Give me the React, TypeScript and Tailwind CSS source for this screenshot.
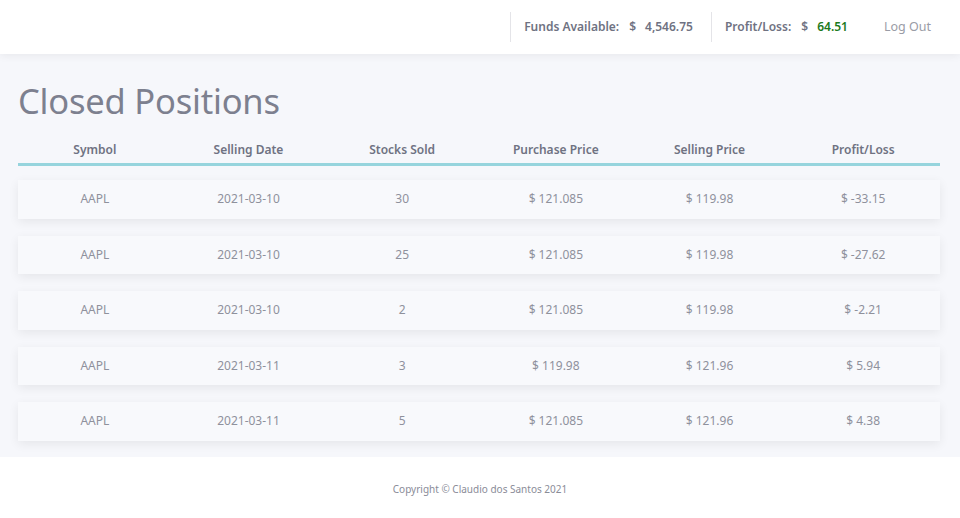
const rows = [
  { symbol: "AAPL", date: "2021-03-10", sold: "30", purchase: "$ 121.085", selling: "$ 119.98", pl: "$ -33.15" },
  { symbol: "AAPL", date: "2021-03-10", sold: "25", purchase: "$ 121.085", selling: "$ 119.98", pl: "$ -27.62" },
  { symbol: "AAPL", date: "2021-03-10", sold: "2", purchase: "$ 121.085", selling: "$ 119.98", pl: "$ -2.21" },
  { symbol: "AAPL", date: "2021-03-11", sold: "3", purchase: "$ 119.98", selling: "$ 121.96", pl: "$ 5.94" },
  { symbol: "AAPL", date: "2021-03-11", sold: "5", purchase: "$ 121.085", selling: "$ 121.96", pl: "$ 4.38" },
];

const headers = ["Symbol", "Selling Date", "Stocks Sold", "Purchase Price", "Selling Price", "Profit/Loss"];

const App = () => {
  return (
    <div className="min-h-screen bg-white flex flex-col" style={{ fontFamily: '"Noto Sans", "Open Sans", sans-serif' }}>
      <header className="relative z-10 h-[54px] bg-white shadow-[0_2px_8px_rgba(0,0,0,0.06)] flex items-center justify-end pr-[29px] text-[12px] text-[#6f7282]">
        <div className="flex items-center h-[30px] border-l border-[#e4e4e8] pl-[13px] pr-[18px] font-semibold">
          <span>Funds Available:</span>
          <span className="ml-[10px]">$</span>
          <span className="ml-[9px]">4,546.75</span>
        </div>
        <div className="flex items-center h-[30px] border-l border-[#e4e4e8] pl-[13px] font-semibold">
          <span>Profit/Loss:</span>
          <span className="ml-[10px]">$</span>
          <span className="ml-[9px] text-[#1c7a1c]">64.51</span>
        </div>
        <span className="ml-[36px] text-[12.5px] text-[#9a9ca6]">Log Out</span>
      </header>

      <main className="bg-[#f6f7fb] pl-[18px] pr-[20px] pt-[22px] pb-[16px]">
        <h1 className="text-[34.5px] leading-[50px] text-[#7d808f] font-normal tracking-[-0.2px]">Closed Positions</h1>
        <div className="mt-[15px] grid grid-cols-6 border-b-[3px] border-[#96d4dd] pb-[4px]">
          {headers.map((h) => (
            <div key={h} className="text-center text-[12px] font-semibold text-[#6f7282]">{h}</div>
          ))}
        </div>
        <div className="mt-[14px] flex flex-col gap-[17px]">
          {rows.map((r, i) => (
            <div key={i} className="grid grid-cols-6 h-[38.5px] items-center bg-[#f8f9fc] shadow-[0_3px_10px_rgba(0,0,0,0.07)] text-[12px] text-[#8f919c]">
              <div className="text-center">{r.symbol}</div>
              <div className="text-center">{r.date}</div>
              <div className="text-center">{r.sold}</div>
              <div className="text-center">{r.purchase}</div>
              <div className="text-center">{r.selling}</div>
              <div className="text-center">{r.pl}</div>
            </div>
          ))}
        </div>
      </main>

      <footer className="flex-1 bg-white flex justify-center pt-[25px] text-[10px] text-[#8a8c98]">
        Copyright © Claudio dos Santos 2021
      </footer>
    </div>
  );
};

export default App;
